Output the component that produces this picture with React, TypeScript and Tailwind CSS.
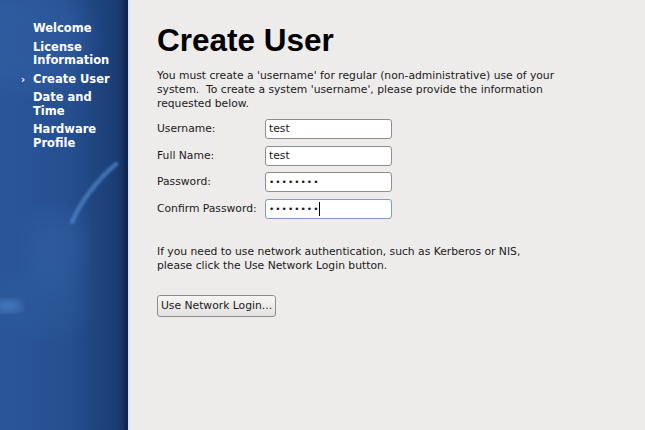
import React from 'react';

// ─── Sidebar ────────────────────────────────────────────────────────────────────

const STEPS = [
  { label: ['Welcome'] },
  { label: ['License', 'Information'] },
  { label: ['Create User'], current: true },
  { label: ['Date and', 'Time'] },
  { label: ['Hardware', 'Profile'] },
];

function Sidebar() {
  return (
    <div className="relative w-[130px] shrink-0 h-full overflow-hidden bg-[linear-gradient(90deg,#2a5698_0%,#264f90_55%,#1b3e74_90%,#132d5a_100%)] border-r-2 border-r-[#dfe3ea]">
      <svg className="absolute inset-0" width="128" height="430" viewBox="0 0 128 430">
        <defs>
          <filter id="blur4"><feGaussianBlur stdDeviation="4" /></filter>
          <filter id="blur1"><feGaussianBlur stdDeviation="1.2" /></filter>
          <filter id="blur10"><feGaussianBlur stdDeviation="12" /></filter>
        </defs>
        <ellipse cx="30" cy="40" rx="60" ry="50" fill="#3a6ab0" opacity="0.3" filter="url(#blur10)" />
        <ellipse cx="55" cy="250" rx="30" ry="40" fill="#3b6cb0" opacity="0.35" filter="url(#blur10)" />
        <ellipse cx="40" cy="300" rx="45" ry="35" fill="#2f5f9f" opacity="0.4" filter="url(#blur10)" />
        <ellipse cx="8" cy="306" rx="14" ry="6" fill="#4d82c8" opacity="0.8" filter="url(#blur4)" />
        <path d="M72 222 Q 86 190 116 164" stroke="#4f86cc" strokeWidth="4.5" strokeLinecap="round" fill="none" opacity="0.7" filter="url(#blur1)" />
        <rect x="124" y="0" width="4" height="430" fill="#0c2148" opacity="0.5" />
      </svg>
      <div className="relative pt-[22px] pl-[33px] flex flex-col gap-[5px] text-white font-['DejaVu_Sans',sans-serif] font-bold text-[11.5px] leading-[13.5px]">
        {STEPS.map((s, i) => (
          <div key={i} className="relative">
            {s.current && <span className="absolute -left-[12px] top-0 text-[10px]">›</span>}
            {s.label.map(l => <div key={l}>{l}</div>)}
          </div>
        ))}
      </div>
    </div>
  );
}

// ─── Form ───────────────────────────────────────────────────────────────────────

function Field({ label, value, focused }: { label: string; value: string; focused?: boolean }) {
  return (
    <div className="flex items-center h-[20px]">
      <div className="w-[108px]">{label}</div>
      <div className={focused
        ? 'w-[127px] h-[20px] rounded-[3px] border border-[#7f9dc4] bg-white px-[3px] flex items-center'
        : 'w-[127px] h-[20px] rounded-[3px] border border-[#8e8d8b] bg-white px-[3px] flex items-center'}>
        <span className={value.startsWith('•') ? 'text-[9px] tracking-[1px]' : ''}>{value}</span>
        {focused && <span className="w-px h-[14px] bg-black" />}
      </div>
    </div>
  );
}

export default function App() {
  return (
    <div className="w-[645px] h-[430px] flex bg-[#edeceb] overflow-hidden">
      <Sidebar />
      <div className="pl-[27px] pt-[21px] text-[10.75px] leading-[14px] text-[#1a1a1a] font-['DejaVu_Sans',sans-serif]">
        <h1 className="font-['Liberation_Sans',sans-serif] font-bold text-[31.5px] leading-[38px] text-black">Create User</h1>
        <p className="mt-[10px] w-[410px]">
          You must create a 'username' for regular (non-administrative) use of your system.&nbsp; To create a system 'username', please provide the information requested below.
        </p>
        <div className="mt-[8px] flex flex-col gap-[6.7px]">
          <Field label="Username:" value="test" />
          <Field label="Full Name:" value="test" />
          <Field label="Password:" value="••••••••" />
          <Field label="Confirm Password:" value="••••••••" focused />
        </div>
        <p className="mt-[26px]">
          If you need to use network authentication, such as Kerberos or NIS,<br />
          please click the Use Network Login button.
        </p>
        <button className="mt-[22px] h-[22px] px-[3px] rounded-[3px] border border-[#8e8d8b] bg-[linear-gradient(#f6f5f4,#e4e2df)] text-[10.75px] leading-[14px]">
          Use Network Login...
        </button>
      </div>
    </div>
  );
}
